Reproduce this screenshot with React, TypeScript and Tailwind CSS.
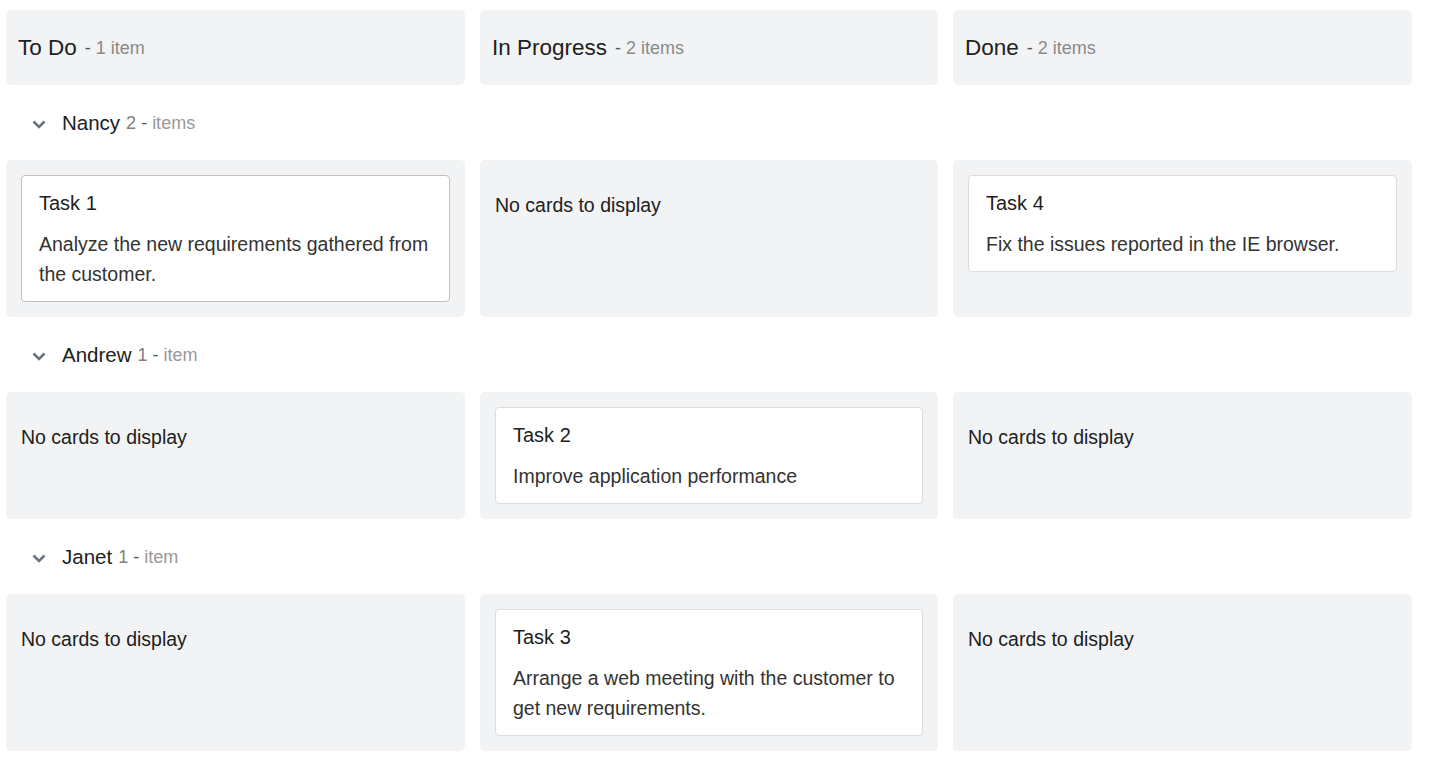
import React from "react";

type Card = { title: string; body: string };
type Lane = { name: string; count: string; unit: string; cells: (Card | null)[] };

const columns = [
  { title: "To Do", count: "1 item" },
  { title: "In Progress", count: "2 items" },
  { title: "Done", count: "2 items" },
];

const lanes: Lane[] = [
  {
    name: "Nancy",
    count: "2",
    unit: "items",
    cells: [
      { title: "Task 1", body: "Analyze the new requirements gathered from the customer." },
      null,
      { title: "Task 4", body: "Fix the issues reported in the IE browser." },
    ],
  },
  {
    name: "Andrew",
    count: "1",
    unit: "item",
    cells: [null, { title: "Task 2", body: "Improve application performance" }, null],
  },
  {
    name: "Janet",
    count: "1",
    unit: "item",
    cells: [null, { title: "Task 3", body: "Arrange a web meeting with the customer to get new requirements." }, null],
  },
];

function Chevron() {
  return (
    <svg width="16" height="16" viewBox="0 0 16 16" className="shrink-0">
      <path d="M2.5 5.5 L8 11 L13.5 5.5" fill="none" stroke="#6b7280" strokeWidth="2.6" strokeLinecap="butt" strokeLinejoin="miter" />
    </svg>
  );
}

function TaskCard({ card, selected }: { card: Card; selected?: boolean }) {
  return (
    <div
      className={`bg-white rounded-[4px] border pl-[17px] pr-[12px] pt-[14px] pb-[12px] ${
        selected ? "border-[#c2c2c2]" : "border-[#dcdcdc]"
      }`}
    >
      <div className="text-[20px] leading-[26px] text-[#212121]">{card.title}</div>
      <div className="mt-[13px] text-[19.5px] leading-[30px] text-[#333]">{card.body}</div>
    </div>
  );
}

export default function App() {
  return (
    <div
      className="w-[1434px] min-h-[771px] bg-white pt-[10px] pl-[6px]"
      style={{ fontFamily: '"Liberation Sans", Arial, sans-serif' }}
    >
      <div className="grid grid-cols-[459px_458px_459px] gap-x-[15px] w-[1406px]">
        {columns.map((c) => (
          <div key={c.title} className="h-[75px] bg-[#f2f3f5] rounded-[5px] flex items-center pl-[12px]">
            <span className="text-[22.5px] text-[#212121]">{c.title}</span>
            <span className="text-[18px] ml-[8px] text-[#555] pt-[2px]">-</span>
            <span className="text-[18px] ml-[5px] text-[#8a8a8a] pt-[2px]">{c.count}</span>
          </div>
        ))}
      </div>

      {lanes.map((lane, li) => (
        <div key={lane.name}>
          <div className="h-[75px] flex items-center pl-[25px] pt-[2px]">
            <Chevron />
            <span className="ml-[15px] text-[20.5px] text-[#212121]">{lane.name}</span>
            <span className="ml-[6px] text-[18px] text-[#808080]">{lane.count}</span>
            <span className="ml-[5px] text-[18px] text-[#555]">-</span>
            <span className="ml-[5px] text-[18px] text-[#999]">{lane.unit}</span>
          </div>
          <div className="grid grid-cols-[459px_458px_459px] gap-x-[15px] w-[1406px]">
            {lane.cells.map((card, ci) => (
              <div key={ci} className="bg-[#f2f3f5] rounded-[5px] p-[15px] min-h-[126px]">
                {card ? (
                  <TaskCard card={card} selected={li === 0 && ci === 0} />
                ) : (
                  <div className="pt-[15px] text-[19.5px] leading-[30px] text-[#212121]">No cards to display</div>
                )}
              </div>
            ))}
          </div>
        </div>
      ))}
    </div>
  );
}
